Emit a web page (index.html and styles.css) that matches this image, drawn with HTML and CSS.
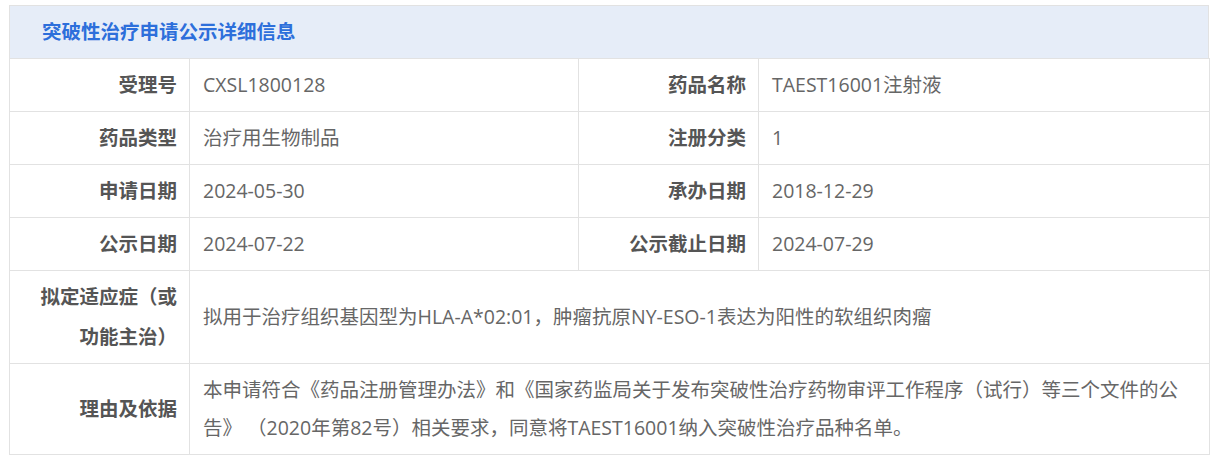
FILE: index.html
```html
<!DOCTYPE html>
<html lang="zh-CN">
<head>
<meta charset="utf-8">
<title>突破性治疗申请公示详细信息</title>
<link rel="stylesheet" href="styles.css">
</head>
<body>
<div class="panel">
  <div class="panel-head">突破性治疗申请公示详细信息</div>
  <table class="info">
    <colgroup>
      <col class="c-label"><col class="c-val1"><col class="c-label"><col class="c-val2">
    </colgroup>
    <tbody>
      <tr>
        <th>受理号</th><td>CXSL1800128</td>
        <th>药品名称</th><td>TAEST16001注射液</td>
      </tr>
      <tr>
        <th>药品类型</th><td>治疗用生物制品</td>
        <th>注册分类</th><td>1</td>
      </tr>
      <tr>
        <th>申请日期</th><td>2024-05-30</td>
        <th>承办日期</th><td>2018-12-29</td>
      </tr>
      <tr>
        <th>公示日期</th><td>2024-07-22</td>
        <th>公示截止日期</th><td>2024-07-29</td>
      </tr>
      <tr>
        <th class="tall">拟定适应症（或功能主治）</th>
        <td colspan="3">拟用于治疗组织基因型为HLA-A*02:01，肿瘤抗原NY-ESO-1表达为阳性的软组织肉瘤</td>
      </tr>
      <tr>
        <th>理由及依据</th>
        <td colspan="3">本申请符合《药品注册管理办法》和《国家药监局关于发布突破性治疗药物审评工作程序（试行）等三个文件的公告》 （2020年第82号）相关要求，同意将TAEST16001纳入突破性治疗品种名单。</td>
      </tr>
    </tbody>
  </table>
</div>
</body>
</html>
```

FILE: styles.css
```css
html, body {
  margin: 0;
  padding: 0;
  background: #ffffff;
}
body {
  padding: 5px 8px 0 9px;
  font-family: "Open Sans", "Noto Sans CJK SC", sans-serif;
  font-size: 19.5px;
  color: #666666;
}
.panel {
  width: 1200px;
  box-sizing: border-box;
}
.panel-head {
  height: 52px;
  line-height: 52px;
  border: 1px solid #e2e2e2;
  border-bottom: none;
  background: #e6edf8;
  color: #2d6fdb;
  font-weight: bold;
  padding-left: 32px;
}
.info {
  width: 1200px;
  border-collapse: collapse;
  table-layout: fixed;
}
.c-label { width: 180px; }
.c-val1 { width: 389px; }
.c-val2 { width: 451px; }
.info th,
.info td {
  border: 1px solid #e2e2e2;
  padding: 7px 12px;
  line-height: 38px;
  vertical-align: middle;
}
.info th {
  text-align: right;
  font-weight: bold;
  color: #555555;
  padding-left: 16px;
}
.info th.tall {
  line-height: 40px;
  padding-top: 6px;
  padding-bottom: 6px;
}
.info td {
  text-align: left;
  padding-left: 13px;
}
```
